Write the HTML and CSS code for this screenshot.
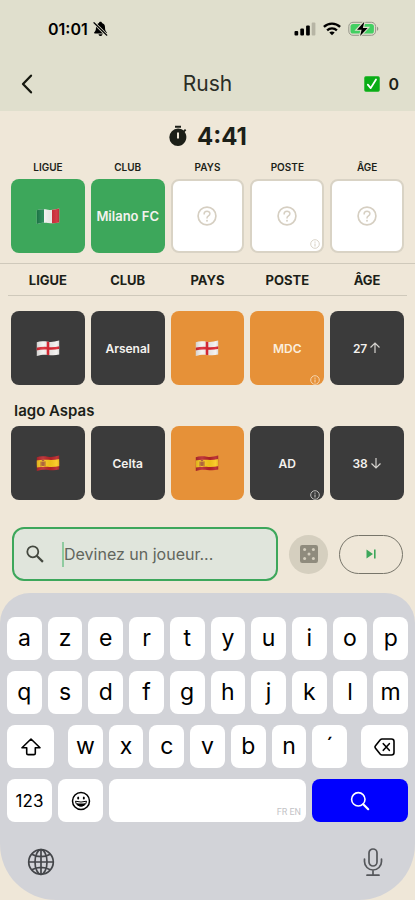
FILE: index.html
```html
<!DOCTYPE html>
<html lang="fr">
<head>
<meta charset="utf-8">
<meta name="viewport" content="width=device-width, initial-scale=1">
<title>Rush</title>
<link rel="stylesheet" href="styles.css">
</head>
<body>
<svg class="defs" width="0" height="0" aria-hidden="true">
  <defs>
    <linearGradient id="wave" x1="0" x2="1" y1="0" y2="0">
      <stop offset="0" stop-color="#000" stop-opacity=".16"/>
      <stop offset=".3" stop-color="#fff" stop-opacity=".1"/>
      <stop offset=".6" stop-color="#000" stop-opacity=".06"/>
      <stop offset=".85" stop-color="#fff" stop-opacity=".08"/>
      <stop offset="1" stop-color="#000" stop-opacity=".16"/>
    </linearGradient>
    <clipPath id="cloth"><path d="M.8 2.200C4 1 8 1.200 12 1.700S19 1.600 23.200.6V14.600C19 15.500 16 15.400 12 14.900S5 14.800.8 16Z"/></clipPath>
    <symbol id="flag-en" viewBox="0 0 24 17">
      <g clip-path="url(#cloth)"><path fill="#f4f2f0" d="M0 0h24v17H0z"/><path fill="none" stroke="#dc2430" stroke-width="2.600" d="M12 0v17M0 9.200C5 8 8 7.900 12 8.300S19 8.500 24 7.500"/><path fill="url(#wave)" d="M0 0h24v17H0z"/></g>
    </symbol>
    <symbol id="flag-es" viewBox="0 0 24 17">
      <g clip-path="url(#cloth)"><path fill="#b82329" d="M0 0h24v17H0z"/><path fill="none" stroke="#fbc91b" stroke-width="7" d="M0 9.200C5 8 8 7.900 12 8.300S19 8.500 24 7.500"/><path fill="#a8552b" d="M4.500 6.500h1v5h-1zM8.500 6.200h1v5h-1zM5.700 7h2.600v3.600q-1.300 1-2.600 0zM5.800 5h2.400v1.400H5.800z"/><path fill="url(#wave)" d="M0 0h24v17H0z"/></g>
    </symbol>
    <symbol id="flag-it" viewBox="0 0 24 17">
      <g clip-path="url(#cloth)"><path fill="#f6f5f3" d="M0 0h24v17H0z"/><path fill="#19804a" d="M0 0h8v17H0z"/><path fill="#cf2b38" d="M16 0h8v17h-8z"/><path fill="url(#wave)" d="M0 0h24v17H0z"/></g>
    </symbol>
    <symbol id="help" viewBox="0 0 20 20"><g fill="none" stroke="currentColor" stroke-linecap="round"><circle cx="10" cy="10" r="8.900" stroke-width="1.700"/><path stroke-width="1.500" d="M7.100 8C7.100 4.300 12.900 4.300 12.900 7.800C12.900 10 10 9.800 10 12"/></g><circle cx="10" cy="14.700" r=".95" fill="currentColor"/></symbol>
    <symbol id="info" viewBox="0 0 10 10"><circle cx="5" cy="5" r="4.300" fill="none" stroke="currentColor" stroke-width=".9"/><path fill="currentColor" d="M4.500 4.400h1v3h-1zM4.500 2.600h1v1.100h-1z"/></symbol>
  </defs>
</svg>

<header class="top">
  <div class="status">
    <div class="clock">01:01
      <svg width="15" height="16" viewBox="0 0 15 16" aria-hidden="true"><path d="M7.500.8c.8 0 1.400.5 1.500 1.200 2 .6 3 2.200 3 4.300 0 3 .7 4 1.700 4.900.5.500.2 1.200-.5 1.200H1.800c-.7 0-1-.7-.5-1.200C2.300 10.200 3 9.300 3 6.300 3 4.200 4 2.600 6 2 6.100 1.300 6.700.8 7.500.8ZM5.500 13.200h4c-.2 1.100-1 1.800-2 1.800s-1.800-.7-2-1.800Z"/><path stroke="#e0dfcd" stroke-width="3" d="M.8 1.500 14 14.500"/><path stroke="#000" stroke-width="1.200" stroke-linecap="round" d="M1 1.700 13.800 14.200"/></svg>
    </div>
    <div class="signals">
      <svg width="22" height="14" viewBox="0 0 22 14" aria-hidden="true"><rect x=".5" y="9" width="3.700" height="4.500" rx="1"/><rect x="6.300" y="6.500" width="3.700" height="7" rx="1"/><rect x="12.100" y="3.500" width="3.700" height="10" rx="1"/><rect x="17.700" y=".5" width="3.700" height="13" rx="1" fill="#b7b5a5"/></svg>
      <svg width="18" height="14" viewBox="0 0 18 14" aria-hidden="true"><g fill="none" stroke="#000" stroke-width="2.300"><path d="M.9 4.900C5.400.4 12.600.4 17.100 4.900"/><path d="M4.100 8.300c2.800-2.700 7-2.700 9.800 0"/></g><path d="M9 13.300 6.300 10.600c1.500-1.400 3.900-1.400 5.400 0Z"/></svg>
      <svg width="31" height="16" viewBox="0 0 31 16" aria-hidden="true"><rect x=".8" y="1.300" width="26.800" height="13" rx="4.200" fill="none" stroke="#96968a"/><rect x="2.500" y="3" width="23.400" height="9.600" rx="2.600" fill="#43cf62"/><path fill="#96968a" d="M29 5.800c1.700.5 1.700 3.500 0 4Z"/><path stroke="#e0dfcd" stroke-width="2.200" paint-order="stroke" d="M16.300.8 9 8.700h4.600l-1.500 6.200 7.500-8h-4.700Z"/></svg>
    </div>
  </div>
  <div class="bar">
    <button class="back" type="button" aria-label="Retour"><svg width="12" height="20" viewBox="0 0 12 20"><path fill="none" stroke="#16180f" stroke-width="2.300" stroke-linecap="round" stroke-linejoin="round" d="M10 1.700 2 10l8 8.300"/></svg></button>
    <h1>Rush</h1>
    <div class="score">
      <svg width="16" height="16" viewBox="0 0 16 16" aria-hidden="true"><rect x=".3" y=".3" width="15.400" height="15.400" rx="2.200" fill="#0aad17" stroke="#3dbd3f" stroke-width=".6"/><path fill="none" stroke="#fff" stroke-width="1.800" stroke-linecap="round" stroke-linejoin="round" d="m3.800 8.600 2.900 3.500L12 3.500"/></svg>
      <span>0</span>
    </div>
  </div>
</header>

<main>
  <div class="timer">
    <svg width="20" height="22" viewBox="0 0 20 22" aria-hidden="true"><path fill="#1c1f18" fill-rule="evenodd" d="M7 .8h6v2H7ZM10 3.600c2 0 3.900.7 5.400 1.800L17 3.900l1.300 1.300L16.700 7c3.900 5 .7 14-6.700 14A8.700 8.700 0 0 1 10 3.600ZM9 7.400v6h2v-6Z"/></svg>
    <span>4:41</span>
  </div>

  <table class="board clues">
    <thead><tr><th>LIGUE</th><th>CLUB</th><th>PAYS</th><th>POSTE</th><th>ÂGE</th></tr></thead>
    <tbody><tr>
      <td><div class="tile hit"><svg class="flag" role="img" aria-label="Italie"><use href="#flag-it"/></svg></div></td>
      <td><div class="tile hit">Milano FC</div></td>
      <td><div class="tile empty"><svg class="help"><use href="#help"/></svg></div></td>
      <td><div class="tile empty"><svg class="help"><use href="#help"/></svg><svg class="info"><use href="#info"/></svg></div></td>
      <td><div class="tile empty"><svg class="help"><use href="#help"/></svg></div></td>
    </tr></tbody>
  </table>

  <section class="guesses">
    <table class="board">
      <thead><tr><th>LIGUE</th><th>CLUB</th><th>PAYS</th><th>POSTE</th><th>ÂGE</th></tr></thead>
      <tbody>
        <tr class="first">
          <td><div class="tile"><svg class="flag" role="img" aria-label="Angleterre"><use href="#flag-en"/></svg></div></td>
          <td><div class="tile">Arsenal</div></td>
          <td><div class="tile near"><svg class="flag" role="img" aria-label="Angleterre"><use href="#flag-en"/></svg></div></td>
          <td><div class="tile near">MDC<svg class="info"><use href="#info"/></svg></div></td>
          <td><div class="tile">27<svg class="arrow" viewBox="0 0 12 12"><path d="M6 11V1M1.500 5.500 6 1l4.500 4.500"/></svg></div></td>
        </tr>
        <tr><th class="player" colspan="5" scope="rowgroup">Iago Aspas</th></tr>
        <tr>
          <td><div class="tile"><svg class="flag" role="img" aria-label="Espagne"><use href="#flag-es"/></svg></div></td>
          <td><div class="tile">Celta</div></td>
          <td><div class="tile near"><svg class="flag" role="img" aria-label="Espagne"><use href="#flag-es"/></svg></div></td>
          <td><div class="tile">AD<svg class="info"><use href="#info"/></svg></div></td>
          <td><div class="tile">38<svg class="arrow" viewBox="0 0 12 12"><path d="M6 1v10M1.500 6.500 6 11l4.500-4.500"/></svg></div></td>
        </tr>
      </tbody>
    </table>
  </section>

  <form class="ask">
    <label class="field">
      <svg width="18" height="18" viewBox="0 0 18 18" aria-hidden="true"><circle cx="6.800" cy="6.800" r="5.500" fill="none" stroke="#44483f" stroke-width="1.800"/><path stroke="#44483f" stroke-width="2.200" d="m10.700 10.700 6.200 6.200"/></svg>
      <span class="caret"></span>
      <input type="text" placeholder="Devinez un joueur..." aria-label="Devinez un joueur">
    </label>
    <button class="dice" type="button" aria-label="Joueur au hasard"><svg width="18" height="18" viewBox="0 0 18 18"><rect width="18" height="18" rx="2.200" fill="#8f8b7d"/><g fill="#d5cfbf"><circle cx="4.600" cy="4.600" r="1.500"/><circle cx="13.400" cy="4.600" r="1.500"/><circle cx="9" cy="9" r="1.500"/><circle cx="4.600" cy="13.400" r="1.500"/><circle cx="13.400" cy="13.400" r="1.500"/></g></svg></button>
    <button class="skip" type="button" aria-label="Passer"><svg width="10" height="10" viewBox="0 0 10 10"><path fill="#3da75b" d="M.5.500 7 5 .5 9.500ZM8 .5h1.600v9H8Z"/></svg></button>
  </form>
</main>

<footer class="keyboard">
  <div class="keys">
    <button type="button">a</button><button type="button">z</button><button type="button">e</button><button type="button">r</button><button type="button">t</button><button type="button">y</button><button type="button">u</button><button type="button">i</button><button type="button">o</button><button type="button">p</button>
  </div>
  <div class="keys">
    <button type="button">q</button><button type="button">s</button><button type="button">d</button><button type="button">f</button><button type="button">g</button><button type="button">h</button><button type="button">j</button><button type="button">k</button><button type="button">l</button><button type="button">m</button>
  </div>
  <div class="keys shifted">
    <button class="side" type="button" aria-label="Majuscule"><svg width="20" height="18" viewBox="0 0 20 18"><path fill="none" stroke="#000" stroke-width="1.600" stroke-linejoin="round" d="M10 1 1 9.800h4.700v5.400q0 1.400 1.400 1.400h5.800q1.400 0 1.400-1.400V9.800H19Z"/></svg></button>
    <div class="keys middle"><button type="button">w</button><button type="button">x</button><button type="button">c</button><button type="button">v</button><button type="button">b</button><button type="button">n</button><button type="button">´</button></div>
    <button class="side" type="button" aria-label="Effacer"><svg width="21" height="18" viewBox="0 0 21 18"><path fill="none" stroke="#000" stroke-width="1.600" stroke-linejoin="round" stroke-linecap="round" d="M8 1h9.500Q20 1 20 3.500v11q0 2.500-2.500 2.500H8q-1 0-1.700-.7L1.500 10.200q-1-1.200 0-2.400L6.300 1.700Q7 1 8 1ZM9.300 5.700l6 6.600M15.300 5.700l-6 6.600"/></svg></button>
  </div>
  <div class="keys">
    <button class="mode" type="button">123</button>
    <button class="mode" type="button" aria-label="Emoji"><svg width="20" height="20" viewBox="0 0 20 20"><circle cx="10" cy="10" r="8.500" fill="none" stroke="#000" stroke-width="1.500"/><ellipse cx="7.200" cy="7" rx="1" ry="1.500"/><ellipse cx="12.800" cy="7" rx="1" ry="1.500"/><path fill="none" stroke="#000" stroke-linejoin="round" d="M4.500 10.200q5.500 1.700 11 0c-.3 6.500-10.700 6.500-11 0Z"/><path d="M5.200 12q4.800 1.200 9.600 0c-1.500 4.700-8.100 4.700-9.600 0Z"/></svg></button>
    <button class="space" type="button" aria-label="Espace"><span>FR EN</span></button>
    <button class="go" type="button" aria-label="Rechercher"><svg width="20" height="20" viewBox="0 0 20 20"><circle cx="8.300" cy="8.300" r="6.700" fill="none" stroke="#fff" stroke-width="1.600"/><path stroke="#fff" stroke-width="2.200" stroke-linecap="round" d="m13.200 13.200 5 5"/></svg></button>
  </div>
  <div class="tools">
    <button type="button" aria-label="Langue"><svg width="28" height="28" viewBox="0 0 28 28"><g fill="none" stroke="#44464a" stroke-width="1.700"><circle cx="14" cy="14" r="12.300"/><ellipse cx="14" cy="14" rx="6" ry="12.300"/><path d="M14 1.700v24.600M1.700 14h24.600M4.700 6.200q9.300 5 18.600 0M4.700 21.800q9.300-5 18.600 0"/></g></svg></button>
    <button type="button" aria-label="Dictée"><svg width="20" height="30" viewBox="0 0 20 30"><g fill="none" stroke="#55575b" stroke-width="1.700" stroke-linecap="round"><rect x="6" y="2" width="8" height="17" rx="4"/><path d="M1.500 12v2.500a8.500 8.500 0 0 0 17 0V12M10 23v5M4 28.200h12"/></g></svg></button>
  </div>
</footer>
</body>
</html>
```
FILE: styles.css
```css
* { box-sizing: border-box; }

body {
  margin: 0;
  min-height: 100vh;
  display: flex;
  flex-direction: column;
  background: #efe7d8;
  color: #1c1f18;
  font-family: Inter, "Liberation Sans", sans-serif;
}

button {
  padding: 0;
  border: 0;
  background: none;
  color: inherit;
  font: inherit;
  display: flex;
  align-items: center;
  justify-content: center;
}

svg { display: block; flex: none; }
.defs { position: absolute; }

/* Header */
.top { background: #e0dfcd; }

.status {
  display: flex;
  justify-content: space-between;
  align-items: center;
  height: 57px;
  padding: 0 36px 0 48px;
}

.clock {
  display: flex;
  align-items: center;
  gap: 5px;
  color: #000;
  font-size: 16px;
  font-weight: 600;
}

.signals { display: flex; align-items: center; gap: 7px; }

.bar {
  display: grid;
  grid-template-columns: 1fr auto 1fr;
  align-items: center;
  height: 54px;
  padding: 0 16px;
}

.back { justify-self: start; width: 22px; height: 32px; }
h1 { margin: 0; font-size: 21px; font-weight: 400; line-height: 28px; color: #2a2d25; }
.score { justify-self: end; display: flex; align-items: center; gap: 8px; font-size: 16px; font-weight: 600; }

/* Boards */
.timer {
  display: flex;
  justify-content: center;
  align-items: center;
  gap: 9px;
  height: 50px;
  font-size: 24px;
  font-weight: 700;
}

.board {
  width: calc(100% - 10px);
  margin: 0 5px;
  table-layout: fixed;
  border-collapse: separate;
  border-spacing: 6px 0;
}

.board th, .board td { padding: 0; }
.board th { height: 32px; font-size: 13px; font-weight: 700; }
.board.clues { margin-bottom: 10px; }
.board.clues th { height: 18px; padding-bottom: 6px; font-size: 10px; line-height: 12px; font-weight: 600; }

.tile {
  position: relative;
  display: flex;
  align-items: center;
  justify-content: center;
  gap: 2px;
  height: 74px;
  border-radius: 8px;
  background: #3b3b3b;
  color: #f4f2ee;
  font-size: 12px;
  font-weight: 600;
  white-space: nowrap;
}

.hit { background: #3da75b; font-size: 13px; }
.near { background: #e69138; color: #fbeedd; }
.empty { background: #fff; border: 2px solid #d9d3c5; color: #d6cfc2; }

.flag { width: 24px; height: 17px; }
.help { width: 20px; height: 20px; }
.info { position: absolute; right: 4px; bottom: 0; width: 10px; height: 10px; opacity: .8; }
.empty .info { right: 2px; bottom: 2px; opacity: 1; }
.arrow { width: 12px; height: 12px; fill: none; stroke: #d5d3cf; stroke-width: 1.2; }

.guesses { border-top: 1px solid #cfc9bb; }
.guesses thead th { position: relative; }
.guesses thead th::after {
  content: "";
  position: absolute;
  left: -3px;
  right: -3px;
  bottom: 0;
  border-bottom: 1px solid #cfc9bb;
}
.first td { padding-top: 15px; }
.board .player { height: 41px; padding: 9px 3px 0; text-align: left; font-size: 15px; font-weight: 600; }

/* Search row */
.ask { display: flex; align-items: center; padding: 27px 12px 12px; }

.field {
  flex: 1;
  min-width: 0;
  display: flex;
  align-items: center;
  height: 54px;
  padding-left: 12px;
  border: 2px solid #3da75b;
  border-radius: 12px;
  background: #e0e5dc;
}

.caret { width: 2px; height: 25px; margin-left: 18px; background: #8fcba0; }

input {
  flex: 1;
  min-width: 0;
  padding: 0;
  border: 0;
  outline: 0;
  background: none;
  font: 16px Inter, "Liberation Sans", sans-serif;
}
input::placeholder { color: #62665d; opacity: 1; }

.dice { width: 39px; height: 39px; margin: 0 11px; border-radius: 50%; background: #d5cfbf; }
.skip { width: 64px; height: 39px; border: 1px solid #77756a; border-radius: 20px; }

/* Keyboard */
.keyboard {
  flex: 1;
  display: flex;
  flex-direction: column;
  gap: 11px;
  padding: 24px 7px 0;
  border-radius: 30px 30px 56px 56px;
  background: #d2d3d8;
  color: #000;
}

.keys { display: flex; gap: 6px; }
.keys button {
  flex: 1;
  min-width: 0;
  height: 43px;
  padding-bottom: 2px;
  border-radius: 8px;
  background: #fff;
  font-size: 23px;
}
.shifted { gap: 14px; }
.middle { flex: 1; }
.keys .side { flex: none; width: 47px; padding: 0; }
.keys .mode { flex: none; width: 45px; padding: 0; font-size: 17px; }
.keys .space { align-items: flex-end; justify-content: flex-end; padding: 0 5px 3px; }
.space span { color: #c3c3c6; font: 9px/14px Roboto, sans-serif; }
.keys .go { flex: none; width: 96px; padding: 0; background: #00f; }

.tools { display: flex; justify-content: space-between; align-items: center; padding: 14px 25px 0 20px; }
```
